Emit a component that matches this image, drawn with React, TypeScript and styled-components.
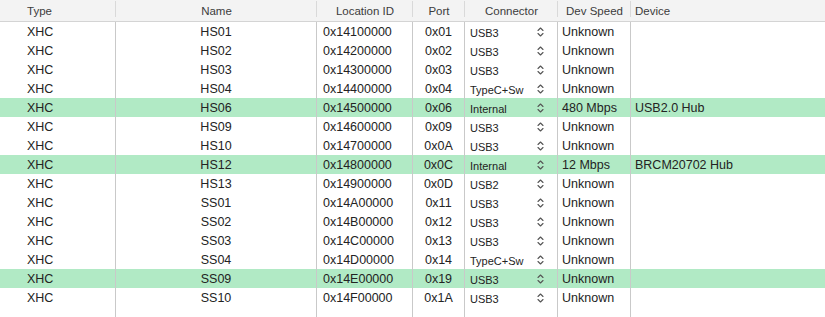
import React from "react";
import styled, { createGlobalStyle } from "styled-components";

const Global = createGlobalStyle`
  html, body { margin: 0; padding: 0; background: #ffffff; }
  body { font-family: "Liberation Sans", Arial, sans-serif; overflow: hidden; }
`;

type Align = "left" | "center";
interface Col { key: string; label: string; width: string; align: Align; headAlign: Align; pad: number; }

const cols: Col[] = [
  { key: "type", label: "Type", width: "116px", align: "left", headAlign: "left", pad: 27 },
  { key: "name", label: "Name", width: "201px", align: "center", headAlign: "center", pad: 0 },
  { key: "loc", label: "Location ID", width: "96px", align: "left", headAlign: "center", pad: 6 },
  { key: "port", label: "Port", width: "52px", align: "center", headAlign: "center", pad: 0 },
  { key: "conn", label: "Connector", width: "93px", align: "left", headAlign: "center", pad: 5 },
  { key: "speed", label: "Dev Speed", width: "73px", align: "left", headAlign: "center", pad: 4 },
  { key: "dev", label: "Device", width: "1fr", align: "left", headAlign: "left", pad: 4 },
];

const template = cols.map((c) => c.width).join(" ");

interface Row { name: string; loc: string; port: string; conn: string; speed: string; dev: string; hl?: boolean; }

const rows: Row[] = [
  { name: "HS01", loc: "0x14100000", port: "0x01", conn: "USB3", speed: "Unknown", dev: "" },
  { name: "HS02", loc: "0x14200000", port: "0x02", conn: "USB3", speed: "Unknown", dev: "" },
  { name: "HS03", loc: "0x14300000", port: "0x03", conn: "USB3", speed: "Unknown", dev: "" },
  { name: "HS04", loc: "0x14400000", port: "0x04", conn: "TypeC+Sw", speed: "Unknown", dev: "" },
  { name: "HS06", loc: "0x14500000", port: "0x06", conn: "Internal", speed: "480 Mbps", dev: "USB2.0 Hub", hl: true },
  { name: "HS09", loc: "0x14600000", port: "0x09", conn: "USB3", speed: "Unknown", dev: "" },
  { name: "HS10", loc: "0x14700000", port: "0x0A", conn: "USB3", speed: "Unknown", dev: "" },
  { name: "HS12", loc: "0x14800000", port: "0x0C", conn: "Internal", speed: "12 Mbps", dev: "BRCM20702 Hub", hl: true },
  { name: "HS13", loc: "0x14900000", port: "0x0D", conn: "USB2", speed: "Unknown", dev: "" },
  { name: "SS01", loc: "0x14A00000", port: "0x11", conn: "USB3", speed: "Unknown", dev: "" },
  { name: "SS02", loc: "0x14B00000", port: "0x12", conn: "USB3", speed: "Unknown", dev: "" },
  { name: "SS03", loc: "0x14C00000", port: "0x13", conn: "USB3", speed: "Unknown", dev: "" },
  { name: "SS04", loc: "0x14D00000", port: "0x14", conn: "TypeC+Sw", speed: "Unknown", dev: "" },
  { name: "SS09", loc: "0x14E00000", port: "0x19", conn: "USB3", speed: "Unknown", dev: "", hl: true },
  { name: "SS10", loc: "0x14F00000", port: "0x1A", conn: "USB3", speed: "Unknown", dev: "" },
];

const Table = styled.div`
  width: 825px;
  height: 317px;
  display: flex;
  flex-direction: column;
  overflow: hidden;
`;

const Header = styled.div`
  display: grid;
  grid-template-columns: ${template};
  height: 21px;
  background: #f3f3f3;
  border-bottom: 1px solid #d4d4d4;
  flex: none;
`;

const HeadCell = styled.div<{ $align: Align; $pad: number; $last?: boolean }>`
  position: relative;
  display: flex;
  align-items: center;
  justify-content: ${(p) => (p.$align === "center" ? "center" : "flex-start")};
  padding-left: ${(p) => p.$pad}px;
  font-size: 11.5px;
  color: #3c3c3c;
  white-space: nowrap;
  &::after {
    content: "";
    display: ${(p) => (p.$last ? "none" : "block")};
    position: absolute;
    right: 0;
    top: 1px;
    width: 1px;
    height: 16px;
    background: #d9d9d9;
  }
`;

const BodyRow = styled.div<{ $hl?: boolean }>`
  display: grid;
  grid-template-columns: ${template};
  height: 19px;
  background: ${(p) => (p.$hl ? "#b1eac5" : "transparent")};
  flex: none;
`;

const Filler = styled.div`
  display: grid;
  grid-template-columns: ${template};
  flex: 1;
`;

const Cell = styled.div<{ $align: Align; $pad: number; $last?: boolean }>`
  display: flex;
  align-items: center;
  justify-content: ${(p) => (p.$align === "center" ? "center" : "flex-start")};
  padding-left: ${(p) => p.$pad}px;
  border-right: ${(p) => (p.$last ? "none" : "1px solid #c9c9c9")};
  font-size: 12.5px;
  color: #232323;
  white-space: nowrap;
  overflow: hidden;
`;

const ConnCell = styled(Cell)`
  justify-content: space-between;
  padding-right: 13px;
`;

const ConnText = styled.span`
  font-size: 11px;
  padding-top: 3px;
  color: #232323;
`;

const Chevrons = () => (
  <svg width="7" height="10" viewBox="0 0 7 10" fill="none" stroke="#555" strokeWidth="1.1" strokeLinecap="round" strokeLinejoin="round">
    <polyline points="1,3.5 3.5,1 6,3.5" />
    <polyline points="1,6.5 3.5,9 6,6.5" />
  </svg>
);

export default function App() {
  return (
    <>
      <Global />
      <Table>
        <Header>
          {cols.map((c, i) => (
            <HeadCell key={c.key} $align={c.headAlign} $pad={c.headAlign === "center" ? 0 : c.pad} $last={i === cols.length - 1}>
              {c.label}
            </HeadCell>
          ))}
        </Header>
        {rows.map((r) => (
          <BodyRow key={r.name} $hl={r.hl}>
            <Cell $align="left" $pad={27}>XHC</Cell>
            <Cell $align="center" $pad={0}>{r.name}</Cell>
            <Cell $align="left" $pad={6}>{r.loc}</Cell>
            <Cell $align="center" $pad={0}>{r.port}</Cell>
            <ConnCell $align="left" $pad={5}>
              <ConnText>{r.conn}</ConnText>
              <Chevrons />
            </ConnCell>
            <Cell $align="left" $pad={4}>{r.speed}</Cell>
            <Cell $align="left" $pad={4} $last>{r.dev}</Cell>
          </BodyRow>
        ))}
        <Filler>
          {cols.map((c, i) => (
            <Cell key={c.key} $align="left" $pad={0} $last={i === cols.length - 1} />
          ))}
        </Filler>
      </Table>
    </>
  );
}
